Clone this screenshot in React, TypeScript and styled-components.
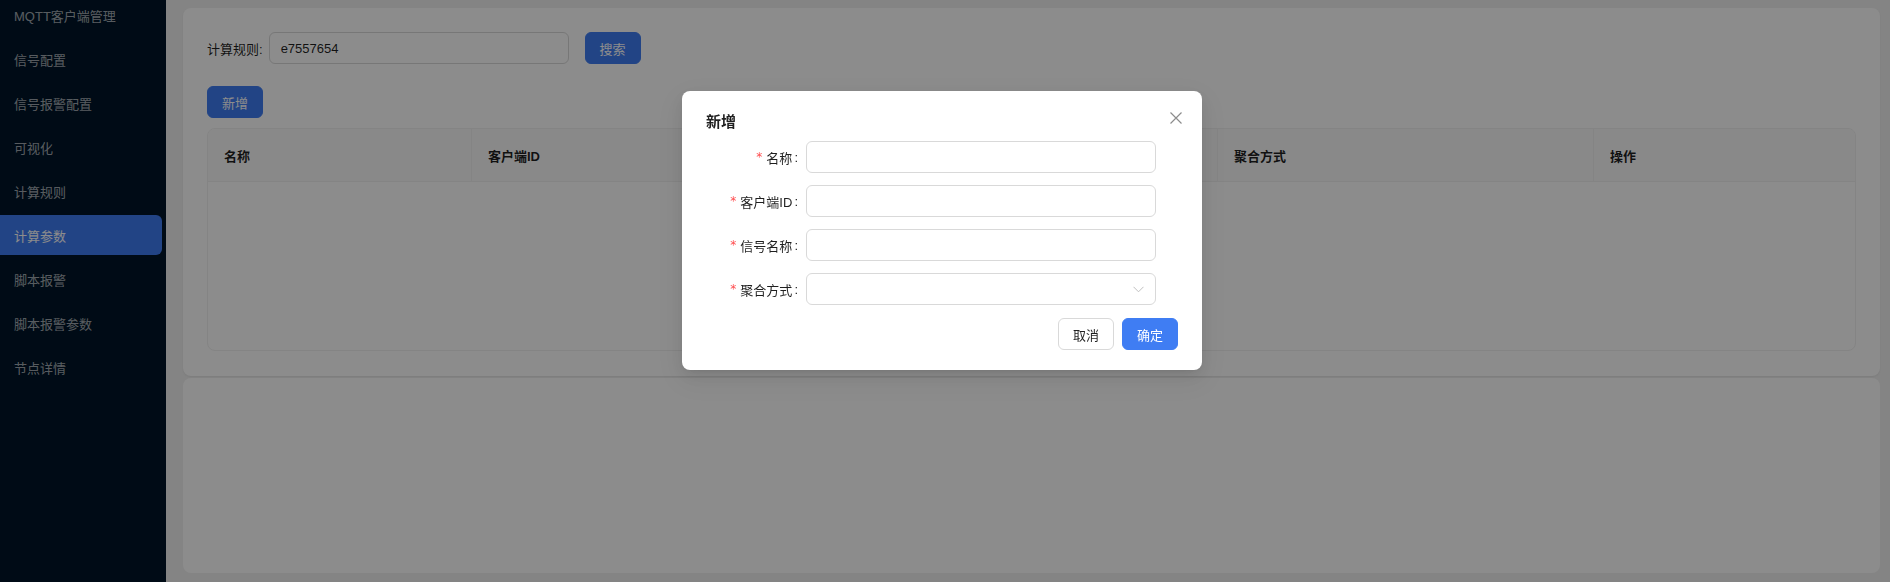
import React from 'react';
import styled, { createGlobalStyle } from 'styled-components';

const GlobalStyle = createGlobalStyle`
  html, body, #root { height: 100%; }
  body {
    margin: 0;
    overflow: hidden;
    font-family: "Liberation Sans", "Noto Sans CJK SC", sans-serif;
    font-size: 13px;
    color: rgba(0, 0, 0, 0.88);
  }
  * { box-sizing: border-box; }
`;

const Layout = styled.div`
  display: grid;
  grid-template-columns: 166px 1fr;
  height: 100%;
`;

const Sidebar = styled.aside`
  background: #001529;
  overflow: hidden;
`;

const Menu = styled.ul`
  list-style: none;
  margin: -5px 0 0;
  padding: 0 4px 0 0;
  display: flex;
  flex-direction: column;
  gap: 4px;
`;

const MenuItem = styled.li<{ $active?: boolean }>`
  height: 40px;
  display: flex;
  align-items: center;
  padding-left: 14px;
  border-radius: 0 6px 6px 0;
  font-size: 13px;
  color: ${(p) => (p.$active ? '#ffffff' : 'rgba(255, 255, 255, 0.65)')};
  background: ${(p) => (p.$active ? '#3f7df3' : 'transparent')};
`;

const Main = styled.main`
  background: #f0f0f0;
  padding: 8px 10px 9px 17px;
  display: flex;
  flex-direction: column;
  gap: 2px;
  min-width: 0;
`;

const Card = styled.section`
  background: #ffffff;
  border-radius: 8px;
  padding: 24px 24px 25px;
  box-shadow: 0 1px 2px rgba(0, 0, 0, 0.06);
  display: flex;
  flex-direction: column;
`;

const FillerCard = styled.div`
  flex: 1;
  background: #ffffff;
  border-radius: 8px;
`;

const SearchRow = styled.div`
  display: flex;
  align-items: center;
  height: 32px;
`;

const FieldLabel = styled.label`
  font-size: 13px;
  margin-right: 6px;
  white-space: nowrap;
`;

const TextInput = styled.div<{ $width?: number }>`
  width: ${(p) => (p.$width ? `${p.$width}px` : '100%')};
  height: 32px;
  border: 1px solid #d9d9d9;
  border-radius: 6px;
  background: #fff;
  display: flex;
  align-items: center;
  justify-content: space-between;
  padding: 0 11px;
  font-size: 13px;
  color: rgba(0, 0, 0, 0.88);
`;

const Button = styled.button<{ $primary?: boolean }>`
  width: 56px;
  height: 32px;
  border-radius: 6px;
  font-family: inherit;
  font-size: 13px;
  padding: 0;
  cursor: pointer;
  border: 1px solid ${(p) => (p.$primary ? '#3f7df3' : '#d9d9d9')};
  background: ${(p) => (p.$primary ? '#3f7df3' : '#ffffff')};
  color: ${(p) => (p.$primary ? '#ffffff' : 'rgba(0, 0, 0, 0.88)')};
`;

const SearchButton = styled(Button)`
  margin-left: 16px;
`;

const Toolbar = styled.div`
  margin-top: 22px;
  margin-bottom: 10px;
  display: flex;
`;

const Table = styled.div`
  border: 1px solid #f0f0f0;
  border-radius: 8px;
  overflow: hidden;
`;

const HeaderRow = styled.div`
  display: grid;
  grid-template-columns: 264px 373px 373px 376px 1fr;
  background: #fafafa;
  border-bottom: 1px solid #f0f0f0;
`;

const HeaderCell = styled.div`
  height: 52px;
  display: flex;
  align-items: center;
  padding-left: 16px;
  font-weight: 600;
  font-size: 13px;
  border-right: 1px solid #f0f0f0;
  &:last-child { border-right: none; }
`;

const TableBody = styled.div`
  height: 168px;
`;

const Overlay = styled.div`
  position: fixed;
  inset: 0;
  background: rgba(0, 0, 0, 0.45);
  display: flex;
  justify-content: center;
  align-items: flex-start;
  padding: 91px 6px 0 0;
`;

const Modal = styled.div`
  position: relative;
  width: 520px;
  background: #fff;
  border-radius: 8px;
  padding: 20px 24px;
  box-shadow: 0 6px 16px 0 rgba(0, 0, 0, 0.08), 0 3px 6px -4px rgba(0, 0, 0, 0.12),
    0 9px 28px 8px rgba(0, 0, 0, 0.05);
`;

const ModalTitle = styled.div`
  font-size: 15px;
  font-weight: 600;
  line-height: 22px;
  color: rgba(0, 0, 0, 0.88);
`;

const CloseButton = styled.button`
  position: absolute;
  top: 16px;
  right: 15px;
  width: 22px;
  height: 22px;
  border: none;
  background: transparent;
  padding: 0;
  display: flex;
  align-items: center;
  justify-content: center;
  color: rgba(0, 0, 0, 0.45);
`;

const Form = styled.div`
  margin-top: 8px;
  display: flex;
  flex-direction: column;
  gap: 12px;
`;

const FormRow = styled.div`
  display: grid;
  grid-template-columns: 100px 350px;
  align-items: center;
`;

const FormLabel = styled.div`
  display: flex;
  justify-content: flex-end;
  align-items: center;
  font-size: 13px;
  white-space: nowrap;
  padding-right: 8px;
`;

const Required = styled.span`
  color: #ff4d4f;
  font-family: "DejaVu Sans", sans-serif;
  font-size: 12px;
  margin-right: 4px;
`;

const Colon = styled.span`
  margin-left: 2px;
`;

const Footer = styled.div`
  margin-top: 13px;
  display: flex;
  justify-content: flex-end;
  gap: 8px;
`;

const menu = ['MQTT客户端管理', '信号配置', '信号报警配置', '可视化', '计算规则', '计算参数', '脚本报警', '脚本报警参数', '节点详情'];
const columns = ['名称', '客户端ID', '信号名称', '聚合方式', '操作'];
const fields = ['名称', '客户端ID', '信号名称', '聚合方式'];

export default function App() {
  return (
    <>
      <GlobalStyle />
      <Layout>
        <Sidebar>
          <Menu>
            {menu.map((m) => (
              <MenuItem key={m} $active={m === '计算参数'}>{m}</MenuItem>
            ))}
          </Menu>
        </Sidebar>
        <Main>
          <Card>
            <SearchRow>
              <FieldLabel>计算规则:</FieldLabel>
              <TextInput $width={300}>e7557654</TextInput>
              <SearchButton $primary>搜索</SearchButton>
            </SearchRow>
            <Toolbar>
              <Button $primary>新增</Button>
            </Toolbar>
            <Table>
              <HeaderRow>
                {columns.map((c) => (
                  <HeaderCell key={c}>{c}</HeaderCell>
                ))}
              </HeaderRow>
              <TableBody />
            </Table>
          </Card>
          <FillerCard />
        </Main>
      </Layout>
      <Overlay>
        <Modal>
          <ModalTitle>新增</ModalTitle>
          <CloseButton aria-label="close">
            <svg width="14" height="14" viewBox="0 0 14 14" fill="none">
              <path d="M1.5 1.5 L12.5 12.5 M12.5 1.5 L1.5 12.5" stroke="currentColor" strokeWidth="1.2" />
            </svg>
          </CloseButton>
          <Form>
            {fields.map((f) => (
              <FormRow key={f}>
                <FormLabel>
                  <Required>*</Required>
                  {f}
                  <Colon>:</Colon>
                </FormLabel>
                <TextInput>
                  {f === '聚合方式' && (
                    <>
                      <span />
                      <svg width="11" height="7" viewBox="0 0 11 7" fill="none">
                        <path d="M0.5 0.8 L5.5 5.8 L10.5 0.8" stroke="#bfbfbf" strokeWidth="1" />
                      </svg>
                    </>
                  )}
                </TextInput>
              </FormRow>
            ))}
          </Form>
          <Footer>
            <Button>取消</Button>
            <Button $primary>确定</Button>
          </Footer>
        </Modal>
      </Overlay>
    </>
  );
}
